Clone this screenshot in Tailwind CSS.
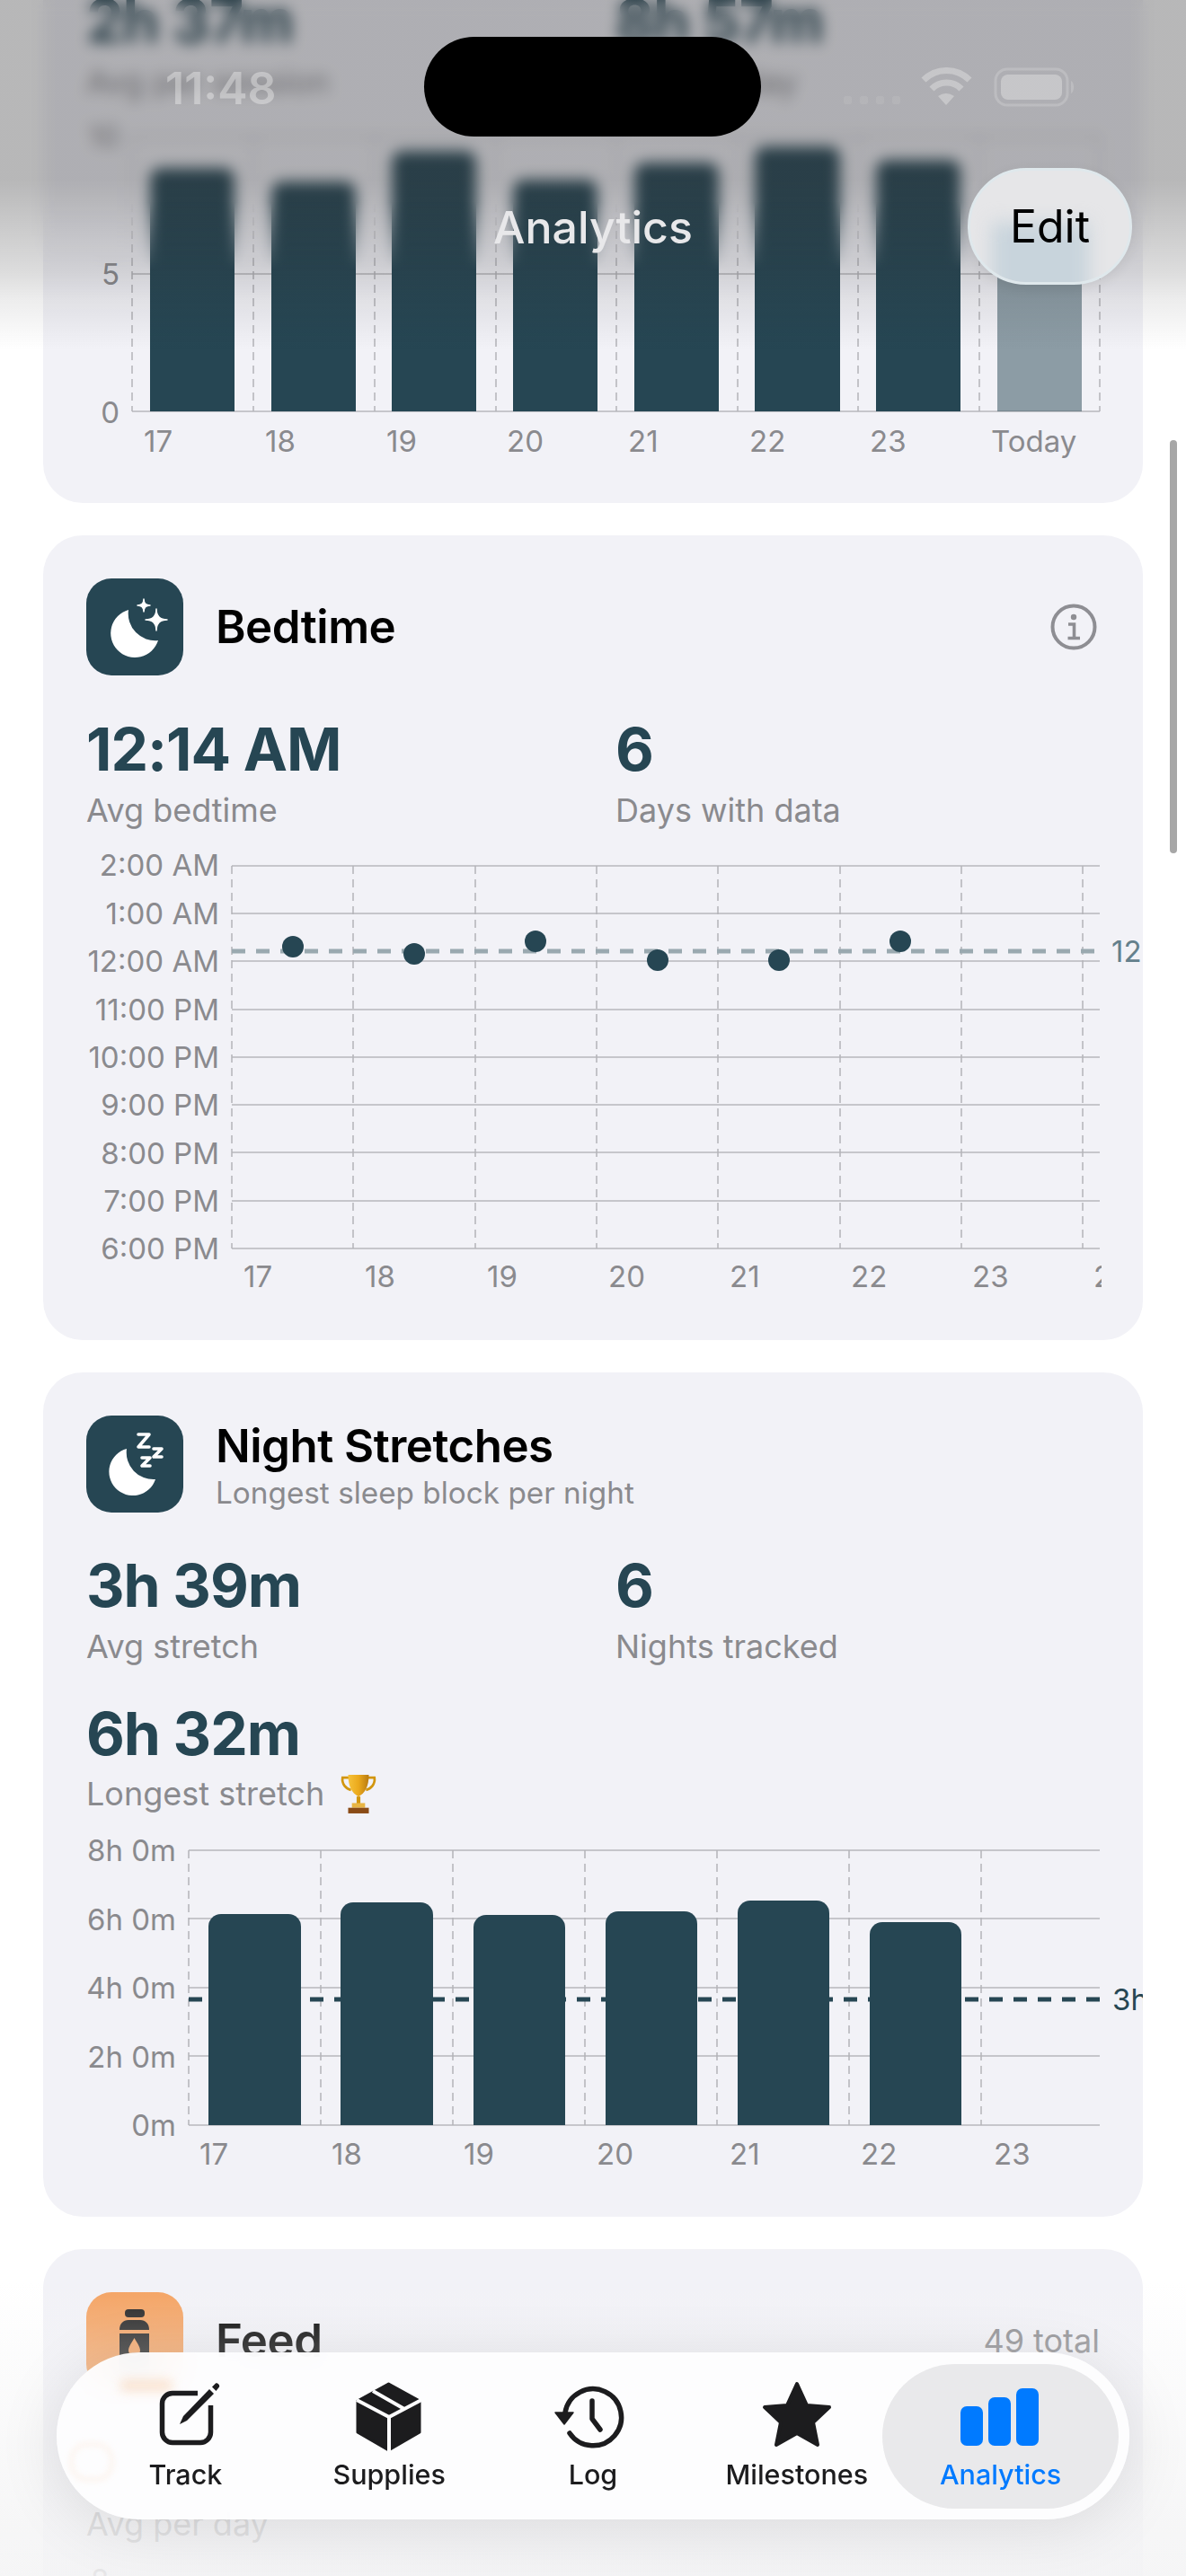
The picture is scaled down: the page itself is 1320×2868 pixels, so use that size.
<!DOCTYPE html>
<html lang="en">
<head>
  <meta charset="UTF-8">
  <meta name="viewport" content="width=device-width, initial-scale=1.0">
  <title>Analytics</title>
  <script src="https://cdn.jsdelivr.net/npm/@tailwindcss/browser@4"></script>
</head>
<body class="bg-white font-['Inter','Noto_Sans',sans-serif]">
<div class="relative w-[1320px] h-[2868px] overflow-hidden bg-white">

  <!-- Scrolling content -->
  <main class="flex flex-col gap-[36px] px-[48px] -mt-[60px]">

    <!-- Sleep card (scrolled under the nav bar) -->
    <section class="bg-[#f2f2f7] rounded-[44px] overflow-hidden px-[48px] pt-[43px] pb-[50px]">
      <div class="grid grid-cols-2 gap-x-[50px]">
        <div>
          <p class="text-[66px] leading-[80px] font-bold text-[#264653] tracking-[-1px]">2h 37m</p>
          <p class="mt-[6px] text-[36px] leading-[44px] text-[#8a8a8e]">Avg per session</p>
        </div>
        <div>
          <p class="text-[66px] leading-[80px] font-bold text-[#264653] tracking-[-1px]">8h 57m</p>
          <p class="mt-[6px] text-[36px] leading-[44px] text-[#8a8a8e]">Avg per day</p>
        </div>
      </div>
      <svg class="block mt-[17px] -mr-[48px]" width="1176" height="380" viewBox="96 130 1176 380">
        <g stroke="#c6c6cb" stroke-width="2">
          <line x1="147" x2="1224" y1="152" y2="152"/>
          <line x1="147" x2="1224" y1="305" y2="305"/>
          <line x1="147" x2="1224" y1="458" y2="458"/>
        </g>
        <g stroke="#b4b4b9" stroke-width="1.500" stroke-dasharray="9 6">
          <line x1="147" x2="147" y1="152" y2="458"/>
          <line x1="282" x2="282" y1="152" y2="458"/>
          <line x1="417" x2="417" y1="152" y2="458"/>
          <line x1="552" x2="552" y1="152" y2="458"/>
          <line x1="686" x2="686" y1="152" y2="458"/>
          <line x1="821" x2="821" y1="152" y2="458"/>
          <line x1="955" x2="955" y1="152" y2="458"/>
          <line x1="1090" x2="1090" y1="152" y2="458"/>
          <line x1="1224" x2="1224" y1="152" y2="458"/>
        </g>
        <g fill="#264653">
          <path d="M167 458V199a12 12 0 0 1 12-12h70a12 12 0 0 1 12 12V458Z"/>
          <path d="M302 458V214a12 12 0 0 1 12-12h70a12 12 0 0 1 12 12V458Z"/>
          <path d="M436 458V180a12 12 0 0 1 12-12h70a12 12 0 0 1 12 12V458Z"/>
          <path d="M571 458V212a12 12 0 0 1 12-12h70a12 12 0 0 1 12 12V458Z"/>
          <path d="M706 458V193a12 12 0 0 1 12-12h70a12 12 0 0 1 12 12V458Z"/>
          <path d="M840 458V175a12 12 0 0 1 12-12h71a12 12 0 0 1 12 12V458Z"/>
          <path d="M975 458V190a12 12 0 0 1 12-12h70a12 12 0 0 1 12 12V458Z"/>
          <path d="M1110 458V262a12 12 0 0 1 12-12h70a12 12 0 0 1 12 12V458Z" opacity=".5"/>
        </g>
        <g class="text-[33px] fill-[#8a8a8e]" dominant-baseline="central">
          <text x="133" y="152" text-anchor="end">10</text>
          <text x="133" y="305" text-anchor="end">5</text>
          <text x="133" y="459" text-anchor="end">0</text>
          <text x="160" y="491">17</text>
          <text x="295" y="491">18</text>
          <text x="430" y="491">19</text>
          <text x="564" y="491">20</text>
          <text x="699" y="491">21</text>
          <text x="834" y="491">22</text>
          <text x="968" y="491">23</text>
          <text x="1103" y="491">Today</text>
        </g>
      </svg>
    </section>

    <!-- Bedtime -->
    <section class="bg-[#f2f2f7] rounded-[44px] overflow-hidden px-[48px] pt-[48px] pb-[52px]">
      <div class="flex items-center justify-between">
        <div class="flex items-center gap-[36px]">
          <div class="w-[108px] h-[108px] rounded-[28px] bg-[#264653]">
            <svg width="108" height="108" viewBox="0 0 108 108" fill="#fff">
              <path d="M47 35A27 27 0 1 0 80 69A30 30 0 0 1 47 35Z"/>
              <path d="M78 34Q78 46 90 46Q78 46 78 58Q78 46 66 46Q78 46 78 34Z" stroke="#fff" stroke-width="1.500" stroke-linejoin="round"/>
              <path d="M64 23Q64 30 71 30Q64 30 64 37Q64 30 57 30Q64 30 64 23Z" stroke="#fff" stroke-width="1.500" stroke-linejoin="round"/>
            </svg>
          </div>
          <h2 class="text-[51px] leading-[60px] font-semibold text-black tracking-[-0.5px]">Bedtime</h2>
        </div>
        <svg class="mr-[3px]" width="52" height="52" viewBox="0 0 52 52" fill="none" stroke="#8e8e93" stroke-width="4">
          <circle cx="26" cy="26" r="23.500"/>
          <circle cx="26" cy="15" r="3.200" fill="#8e8e93" stroke="none"/>
          <path d="M20 23H26.500V38M19.500 38.500H33" stroke-width="3.600"/>
        </svg>
      </div>
      <div class="grid grid-cols-2 gap-x-[50px] mt-[42px]">
        <div>
          <p class="text-[66px] leading-[80px] font-bold text-[#264653] tracking-[-1px]">12:14 AM</p>
          <p class="mt-[6px] text-[36px] leading-[44px] text-[#8a8a8e]">Avg bedtime</p>
        </div>
        <div>
          <p class="text-[66px] leading-[80px] font-bold text-[#264653] tracking-[-1px]">6</p>
          <p class="mt-[6px] text-[36px] leading-[44px] text-[#8a8a8e]">Days with data</p>
        </div>
      </div>
      <svg class="block mt-[26px] -mr-[48px]" width="1176" height="490" viewBox="96 950 1176 490">
        <g stroke="#c6c6cb" stroke-width="2">
          <line x1="258" x2="1224" y1="964" y2="964"/>
          <line x1="258" x2="1224" y1="1017" y2="1017"/>
          <line x1="258" x2="1224" y1="1070" y2="1070"/>
          <line x1="258" x2="1224" y1="1124" y2="1124"/>
          <line x1="258" x2="1224" y1="1177" y2="1177"/>
          <line x1="258" x2="1224" y1="1230" y2="1230"/>
          <line x1="258" x2="1224" y1="1283" y2="1283"/>
          <line x1="258" x2="1224" y1="1337" y2="1337"/>
          <line x1="258" x2="1224" y1="1390" y2="1390"/>
        </g>
        <g stroke="#b4b4b9" stroke-width="1.500" stroke-dasharray="9 6">
          <line x1="258" x2="258" y1="964" y2="1390"/>
          <line x1="393" x2="393" y1="964" y2="1390"/>
          <line x1="529" x2="529" y1="964" y2="1390"/>
          <line x1="664" x2="664" y1="964" y2="1390"/>
          <line x1="799" x2="799" y1="964" y2="1390"/>
          <line x1="935" x2="935" y1="964" y2="1390"/>
          <line x1="1070" x2="1070" y1="964" y2="1390"/>
          <line x1="1205" x2="1205" y1="964" y2="1390"/>
        </g>
        <line x1="258" x2="1224" y1="1059" y2="1059" stroke="#9aa9b0" stroke-width="5" stroke-dasharray="15 12"/>
        <g fill="#264653">
          <circle cx="326" cy="1054" r="12"/>
          <circle cx="461" cy="1062" r="12"/>
          <circle cx="596" cy="1048" r="12"/>
          <circle cx="732" cy="1069" r="12"/>
          <circle cx="867" cy="1069" r="12"/>
          <circle cx="1002" cy="1048" r="12"/>
        </g>
        <g class="text-[33px] fill-[#8a8a8e]" dominant-baseline="central" text-anchor="end">
          <text x="244" y="963">2:00 AM</text>
          <text x="244" y="1017">1:00 AM</text>
          <text x="244" y="1070">12:00 AM</text>
          <text x="244" y="1124">11:00 PM</text>
          <text x="244" y="1177">10:00 PM</text>
          <text x="244" y="1230">9:00 PM</text>
          <text x="244" y="1284">8:00 PM</text>
          <text x="244" y="1337">7:00 PM</text>
          <text x="244" y="1390">6:00 PM</text>
        </g>
        <g class="text-[33px] fill-[#8a8a8e]" dominant-baseline="central">
          <text x="271" y="1421">17</text>
          <text x="406" y="1421">18</text>
          <text x="542" y="1421">19</text>
          <text x="677" y="1421">20</text>
          <text x="812" y="1421">21</text>
          <text x="947" y="1421">22</text>
          <text x="1082" y="1421">23</text>
          <text x="1217" y="1421">24</text>
        </g>
        <rect x="1226" y="1405" width="46" height="35" fill="#f2f2f7"/>
        <text class="text-[33px] fill-[#64808c]" x="1237" y="1059" dominant-baseline="central">12:14 AM</text>
      </svg>
    </section>

    <!-- Night stretches -->
    <section class="bg-[#f2f2f7] rounded-[44px] overflow-hidden px-[48px] pt-[48px] pb-[42px]">
      <div class="flex items-center gap-[36px]">
        <div class="w-[108px] h-[108px] rounded-[28px] bg-[#264653]">
          <svg width="108" height="108" viewBox="0 0 108 108">
            <path d="M45 37A26.500 26.500 0 1 0 77 71A30 30 0 0 1 45 37Z" fill="#fff"/>
            <g fill="none" stroke="#fff" stroke-width="3.600" stroke-linejoin="round" stroke-linecap="round">
              <path d="M58 21H70L58 35H70"/>
              <path d="M75 37H84L75 46H84"/>
              <path d="M62 47H71L62 56H71"/>
            </g>
          </svg>
        </div>
        <div>
          <h2 class="text-[51px] leading-[64px] font-semibold text-black tracking-[-0.5px]">Night Stretches</h2>
          <p class="text-[33.300px] leading-[40px] text-[#8a8a8e]">Longest sleep block per night</p>
        </div>
      </div>
      <div class="grid grid-cols-2 gap-x-[50px] mt-[41px]">
        <div>
          <p class="text-[66px] leading-[80px] font-bold text-[#264653] tracking-[-1px]">3h 39m</p>
          <p class="mt-[6px] text-[36px] leading-[44px] text-[#8a8a8e]">Avg stretch</p>
        </div>
        <div>
          <p class="text-[66px] leading-[80px] font-bold text-[#264653] tracking-[-1px]">6</p>
          <p class="mt-[6px] text-[36px] leading-[44px] text-[#8a8a8e]">Nights tracked</p>
        </div>
      </div>
      <p class="mt-[35px] text-[66px] leading-[80px] font-bold text-[#264653] tracking-[-1px]">6h 32m</p>
      <div class="mt-[5px] flex items-center gap-[16px] h-[44px]">
        <p class="text-[36px] leading-[44px] text-[#8a8a8e]">Longest stretch</p>
        <svg width="44" height="46" viewBox="0 0 42 44">
          <defs>
            <linearGradient id="cup" x1="0" x2="1" y1="0" y2="0">
              <stop offset="0" stop-color="#f6c23a"/>
              <stop offset=".5" stop-color="#eba91c"/>
              <stop offset="1" stop-color="#b87a10"/>
            </linearGradient>
          </defs>
          <path d="M11 5H4C3 12 8 17 13 18M31 5H38C39 12 34 17 29 18" fill="none" stroke="#d2960f" stroke-width="2.600"/>
          <path d="M10 2H32C32 14 28 22 21 25C14 22 10 14 10 2Z" fill="url(#cup)"/>
          <rect x="19" y="25" width="4" height="8" fill="#d2960f"/>
          <rect x="14" y="32" width="14" height="5" fill="#e8b544"/>
          <rect x="10" y="37" width="22" height="6" fill="#8a4b16"/>
        </svg>
      </div>
      <svg class="block mt-[27px] -mr-[48px]" width="1176" height="380" viewBox="96 2046 1176 380">
        <g stroke="#c6c6cb" stroke-width="2">
          <line x1="210" x2="1224" y1="2060" y2="2060"/>
          <line x1="210" x2="1224" y1="2136" y2="2136"/>
          <line x1="210" x2="1224" y1="2213" y2="2213"/>
          <line x1="210" x2="1224" y1="2289" y2="2289"/>
          <line x1="210" x2="1224" y1="2366" y2="2366"/>
        </g>
        <g stroke="#b4b4b9" stroke-width="1.500" stroke-dasharray="9 6">
          <line x1="210" x2="210" y1="2060" y2="2366"/>
          <line x1="357" x2="357" y1="2060" y2="2366"/>
          <line x1="504" x2="504" y1="2060" y2="2366"/>
          <line x1="651" x2="651" y1="2060" y2="2366"/>
          <line x1="798" x2="798" y1="2060" y2="2366"/>
          <line x1="945" x2="945" y1="2060" y2="2366"/>
          <line x1="1092" x2="1092" y1="2060" y2="2366"/>
        </g>
        <line x1="210" x2="1224" y1="2226" y2="2226" stroke="#264653" stroke-width="5" stroke-dasharray="15 12"/>
        <g fill="#264653">
          <path d="M232 2366V2145a14 14 0 0 1 14-14h75a14 14 0 0 1 14 14V2366Z"/>
          <path d="M379 2366V2132a14 14 0 0 1 14-14h75a14 14 0 0 1 14 14V2366Z"/>
          <path d="M527 2366V2146a14 14 0 0 1 14-14h74a14 14 0 0 1 14 14V2366Z"/>
          <path d="M674 2366V2142a14 14 0 0 1 14-14h74a14 14 0 0 1 14 14V2366Z"/>
          <path d="M821 2366V2130a14 14 0 0 1 14-14h74a14 14 0 0 1 14 14V2366Z"/>
          <path d="M968 2366V2154a14 14 0 0 1 14-14h74a14 14 0 0 1 14 14V2366Z"/>
        </g>
        <g class="text-[33px] fill-[#8a8a8e]" dominant-baseline="central" text-anchor="end">
          <text x="196" y="2060">8h 0m</text>
          <text x="196" y="2137">6h 0m</text>
          <text x="196" y="2213">4h 0m</text>
          <text x="196" y="2290">2h 0m</text>
          <text x="196" y="2366">0m</text>
        </g>
        <g class="text-[33px] fill-[#8a8a8e]" dominant-baseline="central">
          <text x="222" y="2398">17</text>
          <text x="369" y="2398">18</text>
          <text x="516" y="2398">19</text>
          <text x="664" y="2398">20</text>
          <text x="812" y="2398">21</text>
          <text x="958" y="2398">22</text>
          <text x="1106" y="2398">23</text>
        </g>
        <text class="text-[33px] fill-[#264653]" x="1238" y="2226" dominant-baseline="central">3h 39m</text>
      </svg>
    </section>

    <!-- Feed (mostly behind the tab bar) -->
    <section class="bg-[#f2f2f7] rounded-[44px] overflow-hidden px-[48px] pt-[48px] pb-[48px]">
      <div class="flex items-center justify-between">
        <div class="flex items-center gap-[36px]">
          <div class="w-[108px] h-[108px] rounded-[28px] bg-[#f4a261]">
            <svg width="108" height="108" viewBox="96 2552 108 108">
              <rect x="139" y="2571" width="22" height="9" rx="4" fill="#222"/>
              <path d="M133 2594C133 2587 137 2583 143 2583H156C162 2583 166 2587 166 2594Z" fill="#222"/>
              <path fill-rule="evenodd" d="M133 2598H166V2645H133ZM149.500 2603C146 2609 143 2613 143 2617A6.500 6.500 0 0 0 156 2617C156 2613 153 2609 149.500 2603Z" fill="#222"/>
            </svg>
          </div>
          <h2 class="text-[51px] leading-[60px] font-semibold text-black tracking-[-0.5px]">Feed</h2>
        </div>
        <span class="text-[36px] leading-[44px] text-[#8a8a8e]">49 total</span>
      </div>
      <p class="mt-[128px] text-[36px] leading-[44px] text-[#8a8a8e]">Avg per day</p>
      <p class="mt-[20px] pl-[5px] text-[33px] leading-[40px] text-[#8a8a8e]">8</p>
    </section>
  </main>

  <!-- Bottom fade behind the tab bar -->
  <div class="absolute left-0 right-0 top-[2540px] bottom-0 bg-[linear-gradient(to_bottom,rgba(244,244,245,0)_0,rgba(244,244,245,.25)_70px,rgba(244,244,245,.8)_270px,rgba(244,244,245,.88)_100%)]"></div>

  <!-- Top blur and dimming -->
  <div class="absolute left-0 right-0 top-0 h-[320px] backdrop-blur-[8px] [mask-image:linear-gradient(to_bottom,black_0,black_225px,transparent_300px)]"></div>
  <div class="absolute left-0 right-0 top-0 h-[390px] bg-[linear-gradient(to_bottom,rgba(50,50,52,.35)_0,rgba(50,50,52,.35)_200px,rgba(50,50,52,.17)_303px,rgba(50,50,52,.09)_333px,rgba(50,50,52,0)_390px)]"></div>

  <!-- Status bar -->
  <span class="absolute left-[184px] top-[68px] text-[50px] leading-[60px] font-semibold text-white/35">11:48</span>
  <div class="absolute left-[472px] top-[41px] w-[375px] h-[111px] rounded-full bg-black"></div>
  <svg class="absolute left-[930px] top-[70px]" width="280" height="56" viewBox="930 70 280 56" fill="none">
    <g fill="#fff" fill-opacity=".08">
      <rect x="939" y="107" width="9" height="9" rx="3"/>
      <rect x="957" y="107" width="9" height="9" rx="3"/>
      <rect x="975" y="107" width="9" height="9" rx="3"/>
      <rect x="993" y="107" width="9" height="9" rx="3"/>
    </g>
    <g stroke="#fff" stroke-opacity=".3" stroke-width="7">
      <path d="M1028 89A36 36 0 0 1 1079 89"/>
      <path d="M1037 99A23 23 0 0 1 1070 99"/>
    </g>
    <path d="M1044 107Q1053 101 1062 107L1053 117Z" fill="#fff" fill-opacity=".3"/>
    <rect x="1108" y="77" width="80" height="40" rx="13" stroke="#fff" stroke-opacity=".18" stroke-width="3"/>
    <rect x="1114" y="83" width="68" height="28" rx="8" fill="#fff" fill-opacity=".3"/>
    <path d="M1192 90C1196 92 1196 102 1192 104Z" fill="#fff" fill-opacity=".18"/>
  </svg>

  <!-- Nav bar -->
  <span class="absolute left-0 right-0 top-[223px] text-center text-[50px] leading-[60px] font-medium text-[#e8e8ea]">Analytics</span>
  <button class="absolute left-[1077px] top-[187px] w-[183px] h-[130px] rounded-full overflow-hidden bg-[#e6e6e8] border-[3px] border-[#dfe8ec] shadow-[0_4px_14px_rgba(0,0,0,.08)]">
    <span class="absolute left-[24px] top-[58px] w-[108px] h-[90px] bg-[#c8d4dc] blur-[10px]"></span>
    <span class="relative text-[50px] leading-[60px] text-black">Edit</span>
  </button>

  <!-- Scroll indicator -->
  <div class="absolute left-[1302px] top-[490px] w-[8px] h-[460px] rounded-full bg-[#a7a7a7]"></div>

  <!-- Tab bar -->
  <nav class="absolute left-[63px] top-[2619px] w-[1194px] h-[186px] rounded-full overflow-hidden bg-[#fdfdfe]/95 backdrop-blur-[14px] shadow-[0_10px_70px_rgba(0,0,0,.1)]">
    <div class="absolute left-[919px] top-[13px] w-[263px] h-[161px] rounded-full bg-[#e9e9eb]"></div>
    <!-- faint bleed of the orange icon through the glass -->
    <div class="absolute left-[70px] top-[30px] w-[60px] h-[14px] rounded-full bg-[#f4a261]/25 blur-[6px]"></div>
    <div class="absolute left-[14px] top-[100px] w-[50px] h-[44px] rounded-[20px] border-[5px] border-[#f4a261]/10 blur-[3px]"></div>
    <div class="relative grid grid-cols-5 px-[30px] pt-[29px]">
      <a class="flex flex-col items-center text-[#1c1c1e]">
        <svg width="100" height="84" viewBox="156 2648 100 84" fill="none" stroke="#1c1c1e">
          <path d="M220 2664.500H192A11.500 11.500 0 0 0 180.500 2676V2708A11.500 11.500 0 0 0 192 2719.500H223A11.500 11.500 0 0 0 234.500 2708V2678" stroke-width="5.500"/>
          <path d="M200 2699L204 2690L233 2660L238 2665L208 2695Z" fill="#1c1c1e" stroke="none"/>
          <path d="M236 2657.500L240 2653.500C242 2652.500 245 2655.500 244 2657.500L240.500 2662Z" fill="#1c1c1e" stroke="none"/>
        </svg>
        <span class="mt-[3px] text-[30.500px] leading-[40px] font-medium">Track</span>
      </a>
      <a class="flex flex-col items-center text-[#1c1c1e]">
        <svg width="100" height="84" viewBox="383 2648 100 84">
          <path d="M432.500 2654L467 2673V2708L432.500 2728L398 2708V2673Z" fill="#1c1c1e" stroke="#1c1c1e" stroke-width="3" stroke-linejoin="round"/>
          <path d="M397 2672L433 2691L469 2672M433 2691V2730M415 2662L450 2682" fill="none" stroke="#fdfdfe" stroke-width="4"/>
        </svg>
        <span class="mt-[3px] text-[30.500px] leading-[40px] font-medium">Supplies</span>
      </a>
      <a class="flex flex-col items-center text-[#1c1c1e]">
        <svg width="100" height="84" viewBox="610 2648 100 84" fill="none" stroke="#1c1c1e" stroke-width="5.500" stroke-linecap="round" stroke-linejoin="round">
          <path d="M629 2686A31.500 31.500 0 1 1 634 2709"/>
          <path d="M659 2673V2693L668 2705"/>
          <path d="M618 2686H638L628 2699Z" fill="#1c1c1e" stroke-width="1.500"/>
        </svg>
        <span class="mt-[3px] text-[30.500px] leading-[40px] font-medium">Log</span>
      </a>
      <a class="flex flex-col items-center text-[#1c1c1e]">
        <svg width="100" height="84" viewBox="837 2648 100 84">
          <path d="M887 2654L898 2678L923 2680L905 2697L910 2722L887 2709L864 2722L869 2697L851 2680L876 2678Z" fill="#1c1c1e" stroke="#1c1c1e" stroke-width="4" stroke-linejoin="round"/>
        </svg>
        <span class="mt-[3px] text-[30.500px] leading-[40px] font-medium">Milestones</span>
      </a>
      <a class="flex flex-col items-center text-[#007aff]">
        <svg width="100" height="84" viewBox="1064 2648 100 84" fill="#007aff">
          <rect x="1069" y="2679" width="25" height="44" rx="7"/>
          <rect x="1100" y="2669" width="25" height="54" rx="7"/>
          <rect x="1131" y="2659" width="25" height="64" rx="7"/>
        </svg>
        <span class="mt-[3px] text-[30.500px] leading-[40px] font-medium">Analytics</span>
      </a>
    </div>
  </nav>
</div>
</body>
</html>
